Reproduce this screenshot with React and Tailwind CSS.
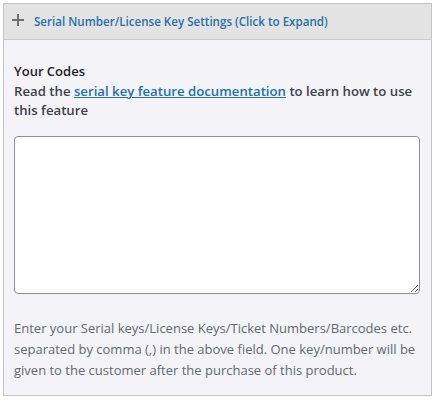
export default function App() {
  return (
    <div
      className="w-[435px] h-[401px] bg-white pt-[3px] px-[3px]"
      style={{ fontFamily: '"Open Sans", "Noto Sans", sans-serif' }}
    >
      <div className="w-[429px] border border-[#c3c4c7] bg-[#f3f3f8]">
        <button className="w-full h-9 flex items-center gap-[8px] pl-[6px] bg-[#e3e3e3] border-b border-[#c9c9cf] text-left">
          <svg width="16" height="16" viewBox="0 0 16 16" className="shrink-0 -mt-[3px]">
            <path d="M8 2v12M2 8h12" stroke="#6f6f6f" strokeWidth="2" />
          </svg>
          <span className="text-[11.6px] font-semibold text-[#2771a8]">
            Serial Number/License Key Settings (Click to Expand)
          </span>
        </button>
        <div className="px-[10px] pt-[21px] pb-[14px]">
          <p className="text-[13px] font-semibold text-[#1d2327] leading-5">Your Codes</p>
          <p className="text-[13.2px] font-semibold text-[#3c434a] leading-[19px] mt-[1px]">
            Read the{" "}
            <a href="#" className="text-[#2271b1] underline">
              serial key feature documentation
            </a>{" "}
            to learn how to use this feature
          </p>
          <textarea className="block w-[406px] h-[158px] mt-[16px] bg-white border border-[#8c8f94] rounded-[4px] resize" />
          <p className="text-[13px] text-[#646970] leading-[21px] mt-[24px]">
            Enter your Serial keys/License Keys/Ticket Numbers/Barcodes etc. separated by comma (,) in the above field. One key/number will be given to the customer after the purchase of this product.
          </p>
        </div>
      </div>
    </div>
  );
}
